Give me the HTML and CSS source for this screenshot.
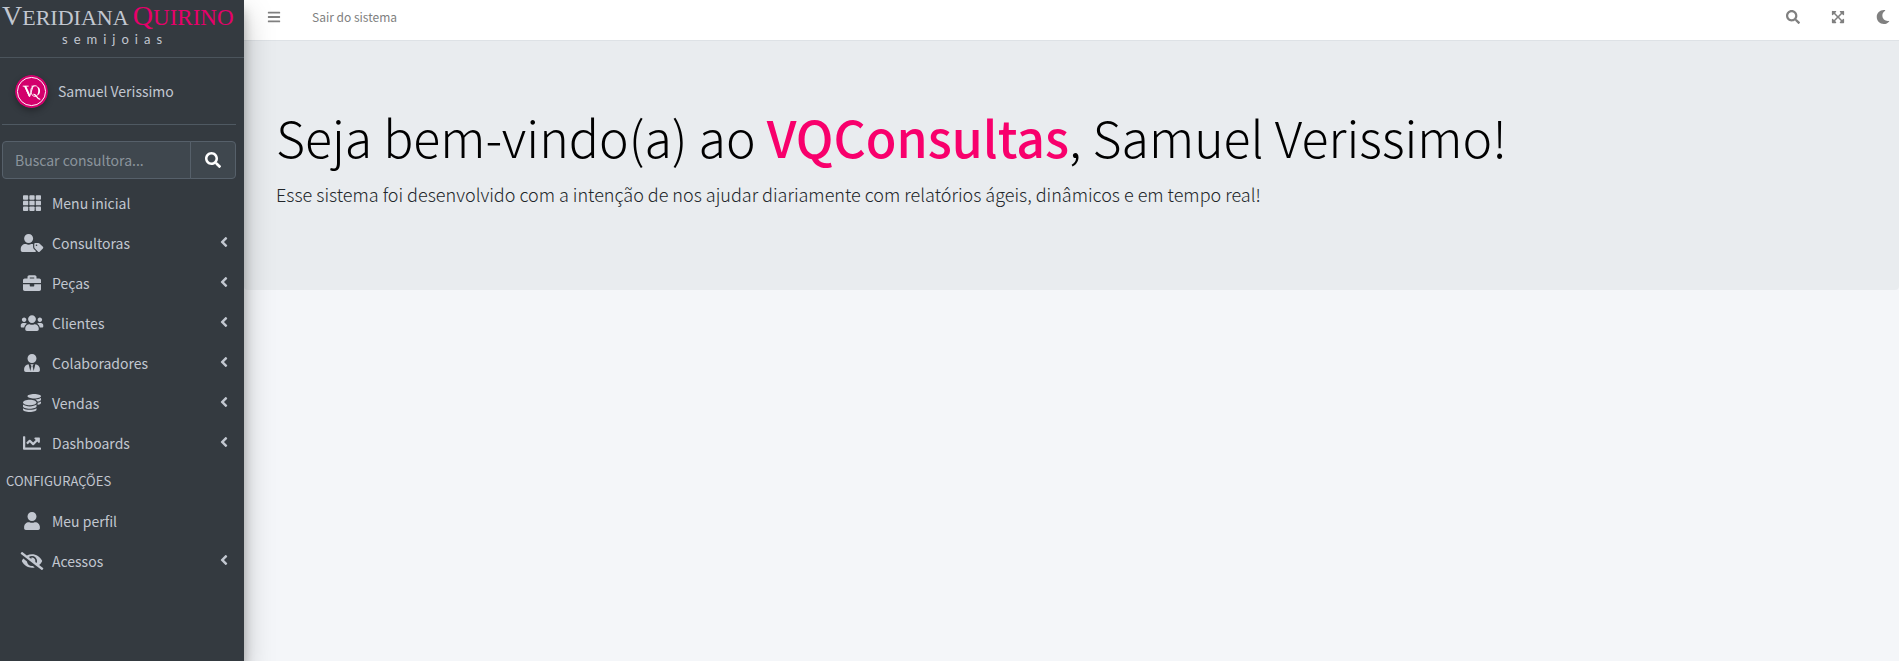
FILE: index.html
```html
<!DOCTYPE html>
<html lang="pt-BR">
<head>
<meta charset="utf-8">
<meta name="viewport" content="width=device-width, initial-scale=1">
<title>VQConsultas</title>
<link rel="stylesheet" href="styles.css">
</head>
<body>
<svg class="sprite" aria-hidden="true">
  <symbol id="bars" viewBox="0 0 448 512"><path d="M16 132h416c8.837 0 16-7.163 16-16V76c0-8.837-7.163-16-16-16H16C7.163 60 0 67.163 0 76v40c0 8.837 7.163 16 16 16zm0 160h416c8.837 0 16-7.163 16-16v-40c0-8.837-7.163-16-16-16H16c-8.837 0-16 7.163-16 16v40c0 8.837 7.163 16 16 16zm0 160h416c8.837 0 16-7.163 16-16v-40c0-8.837-7.163-16-16-16H16c-8.837 0-16 7.163-16 16v40c0 8.837 7.163 16 16 16z"/></symbol>
  <symbol id="search" viewBox="0 0 512 512"><path d="M505 442.700L405.300 343c-4.500-4.500-10.600-7-17-7H372c27.600-35.300 44-79.700 44-128C416 93.100 322.900 0 208 0S0 93.100 0 208s93.100 208 208 208c48.300 0 92.700-16.400 128-44v16.300c0 6.400 2.500 12.500 7 17l99.700 99.700c9.400 9.400 24.600 9.400 33.900 0l28.300-28.300c9.400-9.400 9.400-24.600.1-34zM208 336c-70.700 0-128-57.200-128-128 0-70.700 57.200-128 128-128 70.700 0 128 57.200 128 128 0 70.700-57.200 128-128 128z"/></symbol>
  <symbol id="expand" viewBox="0 0 448 512"><path d="M448 344v112a23.940 23.940 0 0 1-24 24H312c-21.390 0-32.090-25.900-17-41l36.200-36.200L224 295.600 116.770 402.900 153 439c15.090 15.100 4.390 41-17 41H24a23.940 23.940 0 0 1-24-24V344c0-21.400 25.890-32.100 41-17l36.190 36.200L184.460 256 77.180 148.700 41 185c-15.100 15.100-41 4.400-41-17V56a23.940 23.940 0 0 1 24-24h112c21.390 0 32.090 25.900 17 41l-36.200 36.200L224 216.400l107.230-107.300L295 73c-15.090-15.100-4.390-41 17-41h112a23.940 23.940 0 0 1 24 24v112c0 21.400-25.890 32.100-41 17l-36.190-36.200L263.540 256l107.280 107.300L407 327.100c15.100-15.200 41-4.500 41 16.900z"/></symbol>
  <symbol id="moon" viewBox="0 0 512 512"><path d="M283.211 512c78.962 0 151.079-35.925 198.857-94.792 7.068-8.708-.639-21.430-11.562-19.350-124.203 23.654-238.262-71.576-238.262-196.954 0-72.222 38.662-138.635 101.498-174.394 9.686-5.512 7.250-20.197-3.756-22.230A258.156 258.156 0 0 0 283.211 0c-141.309 0-256 114.511-256 256 0 141.309 114.511 256 256 256z"/></symbol>
  <symbol id="angle" viewBox="0 0 256 512"><path d="M31.700 239l136-136c9.400-9.400 24.600-9.400 33.900 0l22.600 22.600c9.400 9.400 9.400 24.600 0 33.900L127.900 256l96.400 96.400c9.400 9.400 9.400 24.600 0 33.900L201.700 409c-9.400 9.400-24.600 9.400-33.900 0l-136-136c-9.500-9.400-9.500-24.600-.1-34z"/></symbol>
  <symbol id="grid" viewBox="0 0 512 512"><rect y="32" width="149" height="128" rx="24"/><rect x="181" y="32" width="150" height="128" rx="24"/><rect x="363" y="32" width="149" height="128" rx="24"/><rect y="192" width="149" height="128" rx="24"/><rect x="181" y="192" width="150" height="128" rx="24"/><rect x="363" y="192" width="149" height="128" rx="24"/><rect y="352" width="149" height="128" rx="24"/><rect x="181" y="352" width="150" height="128" rx="24"/><rect x="363" y="352" width="149" height="128" rx="24"/></symbol>
  <symbol id="user-tag" viewBox="0 0 640 512"><path d="M630.600 364.900l-90.300-90.200c-12-12-28.300-18.700-45.300-18.700h-79.300c-17.700 0-32 14.300-32 32v79.200c0 17 6.700 33.200 18.700 45.200l90.300 90.200c12.500 12.500 32.800 12.500 45.300 0l92.500-92.500c12.600-12.500 12.600-32.700.1-45.200zm-182.800-21c-13.300 0-24-10.700-24-24s10.700-24 24-24 24 10.700 24 24c0 13.200-10.700 24-24 24zm-223.800-88c70.700 0 128-57.300 128-128C352 57.300 294.700 0 224 0S96 57.300 96 128c0 70.600 57.300 127.900 128 127.900zm127.800 111.200V294c-12.200-3.600-24.900-6.200-38.200-6.200h-16.700c-22.200 10.200-46.900 16-72.900 16s-50.600-5.800-72.900-16h-16.700C60.200 287.900 0 348.100 0 422.300V464c0 26.500 21.500 48 48 48h352c15.500 0 29.100-7.500 37.900-18.900l-58-58c-18.100-18.100-28.100-42.200-28.100-67.900z"/></symbol>
  <symbol id="briefcase" viewBox="0 0 512 512"><path d="M320 336c0 8.840-7.160 16-16 16h-96c-8.840 0-16-7.160-16-16v-48H0v144c0 25.600 22.400 48 48 48h416c25.600 0 48-22.400 48-48V288H320v48zm144-208h-80V80c0-25.600-22.400-48-48-48H176c-25.600 0-48 22.400-48 48v48H48c-25.600 0-48 22.400-48 48v80h512v-80c0-25.600-22.400-48-48-48zm-144 0H192V96h128v32z"/></symbol>
  <symbol id="users" viewBox="0 0 640 512"><path d="M96 224c35.300 0 64-28.700 64-64s-28.700-64-64-64-64 28.700-64 64 28.700 64 64 64zm448 0c35.300 0 64-28.700 64-64s-28.700-64-64-64-64 28.700-64 64 28.700 64 64 64zm32 32h-64c-17.600 0-33.500 7.100-45.100 18.600 40.300 22.100 68.900 62 75.100 109.400h66c17.700 0 32-14.300 32-32v-32c0-35.300-28.700-64-64-64zm-256 0c61.900 0 112-50.100 112-112S381.900 32 320 32 208 82.100 208 144s50.100 112 112 112zm76.800 32h-8.300c-20.800 10-43.900 16-68.500 16s-47.600-6-68.500-16h-8.300C179.600 288 128 339.600 128 403.200V432c0 26.500 21.500 48 48 48h288c26.500 0 48-21.500 48-48v-28.800c0-63.600-51.600-115.200-115.200-115.200zm-223.700-13.400C161.500 263.100 145.600 256 128 256H64c-35.300 0-64 28.700-64 64v32c0 17.700 14.300 32 32 32h65.900c6.300-47.400 34.900-87.300 75.200-109.400z"/></symbol>
  <symbol id="user-tie" viewBox="0 0 448 512"><path d="M224 256c70.700 0 128-57.300 128-128S294.700 0 224 0 96 57.300 96 128s57.300 128 128 128zm95.800 32.600L272 480l-32-136 32-56h-96l32 56-32 136-47.800-191.400C56.900 292 0 350.300 0 422.400V464c0 26.500 21.500 48 48 48h352c26.500 0 48-21.500 48-48v-41.600c0-72.100-56.900-130.400-128.200-133.800z"/></symbol>
  <symbol id="coins" viewBox="0 0 512 512"><path d="M0 405.300V448c0 35.300 86 64 192 64s192-28.700 192-64v-42.700C342.700 434.400 267.200 448 192 448S41.300 434.400 0 405.300zM320 128c106 0 192-28.700 192-64S426 0 320 0 128 28.700 128 64s86 64 192 64zM0 300.400V352c0 35.300 86 64 192 64s192-28.700 192-64v-51.600c-41.300 34-116.900 51.600-192 51.600S41.300 334.400 0 300.400zm416 11c57.300-11.100 96-31.700 96-55.400v-42.700c-23.200 16.400-57.300 27.600-96 34.500v63.600zM192 160C86 160 0 195.800 0 240s86 80 192 80 192-35.800 192-80-86-80-192-80zm219.300 56.300c60-10.800 100.700-32 100.700-56.300v-42.700c-35.500 25.100-96.500 38.600-160.700 41.800 29.500 14.300 51.200 33.500 60 57.200z"/></symbol>
  <symbol id="chart" viewBox="0 0 512 512"><path d="M496 384H64V80c0-8.840-7.160-16-16-16H16C7.160 64 0 71.160 0 80v336c0 17.670 14.330 32 32 32h464c8.840 0 16-7.160 16-16v-32c0-8.840-7.160-16-16-16zM464 96H345.940c-21.380 0-32.090 25.850-16.970 40.970l32.400 32.400L288 242.750l-73.370-73.370c-12.500-12.500-32.760-12.500-45.250 0l-68.690 68.690c-6.250 6.250-6.250 16.380 0 22.630l22.620 22.620c6.250 6.250 16.380 6.250 22.630 0L192 237.250l73.370 73.370c12.500 12.500 32.760 12.500 45.250 0l96-96 32.400 32.400c15.120 15.120 40.970 4.410 40.970-16.970V112c.01-8.840-7.150-16-15.990-16z"/></symbol>
  <symbol id="user" viewBox="0 0 448 512"><path d="M224 256c70.700 0 128-57.300 128-128S294.700 0 224 0 96 57.300 96 128s57.300 128 128 128zm89.600 32h-16.700c-22.200 10.200-46.900 16-72.900 16s-50.600-5.800-72.900-16h-16.700C60.200 288 0 348.200 0 422.400V464c0 26.500 21.500 48 48 48h352c26.500 0 48-21.500 48-48v-41.600c0-74.200-60.200-134.400-134.400-134.400z"/></symbol>
  <symbol id="eye-slash" viewBox="0 0 640 512"><path d="M320 400c-75.850 0-137.250-58.710-142.900-133.110L72.200 185.820c-13.790 17.300-26.480 35.590-36.720 55.590a32.350 32.350 0 0 0 0 29.190C89.710 376.410 197.070 448 320 448c26.910 0 52.870-4 77.890-10.460L346 397.390a144.130 144.130 0 0 1-26 2.610zm313.820 58.100l-110.550-85.440a331.250 331.250 0 0 0 81.250-102.070 32.350 32.350 0 0 0 0-29.190C550.290 135.590 442.930 64 320 64a308.150 308.150 0 0 0-147.320 37.700L45.460 3.370A16 16 0 0 0 23 6.180L3.370 31.450A16 16 0 0 0 6.180 53.900l588.360 454.730a16 16 0 0 0 22.460-2.810l19.640-25.270a16 16 0 0 0-2.820-22.450zm-183.720-142l-39.300-30.380A94.750 94.750 0 0 0 416 256a94.760 94.760 0 0 0-121.310-92.210A47.650 47.650 0 0 1 304 192a46.640 46.640 0 0 1-1.540 10l-73.610-56.890A142.310 142.310 0 0 1 320 112a143.920 143.920 0 0 1 144 144c0 21.630-5.290 41.790-13.900 60.110z"/></symbol>
</svg>
<div class="wrapper">
  <aside class="sidebar">
    <a class="brand" href="#">
      <span class="brand-name"><span class="brand-cap">V</span>ERIDIANA <span class="brand-accent"><span class="brand-cap">Q</span>UIRINO</span></span>
      <span class="brand-sub">semijoias</span>
    </a>
    <div class="sidebar-body">
      <a class="user-panel" href="#">
        <svg class="avatar" viewBox="0 0 34 34" aria-hidden="true"><circle cx="17" cy="17" r="17" fill="#d3006c"/><circle cx="17" cy="17" r="14.500" fill="none" stroke="#fff" stroke-width="1"/><path d="M8 11.500h6M10 11.500l5 11L18.500 12M17 11.500h3" fill="none" stroke="#fff" stroke-width="1"/><path d="M10.500 11.500l4.500 10" stroke="#fff" stroke-width="2"/><ellipse cx="20.500" cy="16.500" rx="4.200" ry="5.500" fill="none" stroke="#fff" stroke-width="1"/><path d="M24 13c1.500 2 1 5 0 7" fill="none" stroke="#fff" stroke-width="1.500"/><path d="M19 20c3-1 3 5 7 5" fill="none" stroke="#fff" stroke-width="1.300"/></svg>
        <span>Samuel Verissimo</span>
      </a>
      <form class="search">
        <input class="search-input" type="search" placeholder="Buscar consultora..." aria-label="Buscar consultora">
        <button class="search-button" type="button" aria-label="Buscar"><svg class="icon icon-search"><use href="#search"/></svg></button>
      </form>
      <nav class="menu" aria-label="Menu principal">
        <a class="menu-link" href="#"><svg class="icon menu-icon"><use href="#grid"/></svg><span class="menu-label">Menu inicial</span></a>
        <a class="menu-link" href="#"><svg class="icon menu-icon"><use href="#user-tag"/></svg><span class="menu-label">Consultoras</span><svg class="icon angle"><use href="#angle"/></svg></a>
        <a class="menu-link" href="#"><svg class="icon menu-icon"><use href="#briefcase"/></svg><span class="menu-label">Peças</span><svg class="icon angle"><use href="#angle"/></svg></a>
        <a class="menu-link" href="#"><svg class="icon menu-icon"><use href="#users"/></svg><span class="menu-label">Clientes</span><svg class="icon angle"><use href="#angle"/></svg></a>
        <a class="menu-link" href="#"><svg class="icon menu-icon"><use href="#user-tie"/></svg><span class="menu-label">Colaboradores</span><svg class="icon angle"><use href="#angle"/></svg></a>
        <a class="menu-link" href="#"><svg class="icon menu-icon"><use href="#coins"/></svg><span class="menu-label">Vendas</span><svg class="icon angle"><use href="#angle"/></svg></a>
        <a class="menu-link" href="#"><svg class="icon menu-icon"><use href="#chart"/></svg><span class="menu-label">Dashboards</span><svg class="icon angle"><use href="#angle"/></svg></a>
        <h2 class="menu-header">CONFIGURAÇÕES</h2>
        <a class="menu-link" href="#"><svg class="icon menu-icon"><use href="#user"/></svg><span class="menu-label">Meu perfil</span></a>
        <a class="menu-link" href="#"><svg class="icon menu-icon"><use href="#eye-slash"/></svg><span class="menu-label">Acessos</span><svg class="icon angle"><use href="#angle"/></svg></a>
      </nav>
    </div>
  </aside>
  <div class="page">
    <header class="navbar">
      <button class="nav-button" type="button" aria-label="Alternar menu"><svg class="icon nav-icon"><use href="#bars"/></svg></button>
      <a class="nav-link" href="#">Sair do sistema</a>
      <div class="nav-tools">
        <button class="nav-button" type="button" aria-label="Pesquisar"><svg class="icon nav-icon"><use href="#search"/></svg></button>
        <button class="nav-button" type="button" aria-label="Tela cheia"><svg class="icon nav-icon"><use href="#expand"/></svg></button>
        <button class="nav-button" type="button" aria-label="Modo escuro"><svg class="icon nav-icon"><use href="#moon"/></svg></button>
      </div>
    </header>
    <main>
      <section class="hero">
        <h1 class="hero-title">Seja bem-vindo(a) ao <span class="hero-accent">VQConsultas</span>, Samuel Verissimo!</h1>
        <p class="hero-lead">Esse sistema foi desenvolvido com a intenção de nos ajudar diariamente com relatórios ágeis, dinâmicos e em tempo real!</p>
      </section>
    </main>
  </div>
</div>
</body>
</html>
```
FILE: styles.css
```css
* { box-sizing: border-box; }
body {
  margin: 0;
  background: #f4f6f9;
  color: #212529;
  font: 14px/24px "Source Sans Pro", "Noto Sans CJK SC", "Open Sans", sans-serif;
}
a { color: inherit; text-decoration: none; }
button, input { font: inherit; }
.sprite { display: none; }
.icon { display: block; width: 16px; height: 16px; flex: none; fill: currentColor; }
.wrapper { display: flex; min-height: 100vh; }

/* Sidebar */
.sidebar {
  position: relative;
  z-index: 1;
  flex: 0 0 244px;
  background: #343a40;
  color: #c2c7d0;
  box-shadow: 0 14px 28px rgba(0, 0, 0, .25), 0 10px 10px rgba(0, 0, 0, .22);
}
.brand {
  display: flex;
  flex-direction: column;
  height: 58px;
  border-bottom: 1px solid #4b545c;
  white-space: nowrap;
}
.brand-name { padding: 2px 0 0 2px; font: 22px/28px "Liberation Serif", serif; }
.brand-cap { font-size: 28px; }
.brand-accent { color: #e6006b; font-size: 23px; }
.brand-sub { padding-left: 62px; font-family: Lato, sans-serif; font-size: 13px; line-height: 14px; letter-spacing: 6px; }
.sidebar-body { padding: 0 8px 0 2px; }
.user-panel {
  display: flex;
  align-items: center;
  gap: 10px;
  height: 67px;
  padding-left: 13px;
  border-bottom: 1px solid #4f5962;
}
.avatar { width: 33px; height: 33px; border-radius: 50%; box-shadow: 0 3px 6px rgba(0, 0, 0, .3); }
.search { display: flex; height: 38px; margin: 16px 0 4px; }
.search-input, .search-button { border: 1px solid #56606a; background: #3f474e; color: #fff; }
.search-input {
  flex: 1;
  min-width: 0;
  padding: 0 12px;
  border-radius: 4px 0 0 4px;
}
.search-input::placeholder { color: #8b949c; opacity: 1; }
.search-button {
  display: flex;
  align-items: center;
  justify-content: center;
  width: 46px;
  margin-left: -1px;
  padding: 0;
  border-radius: 0 4px 4px 0;
}
.menu-link { display: flex; align-items: center; height: 40px; padding: 0 4px 0 16px; }
.menu-icon { width: 28px; height: 18px; }
.menu-label { flex: 1; padding-left: 6px; }
.angle { margin-bottom: 2px; }
.menu-header { margin: 0; padding: 6px 4px 8px; font-size: 13px; font-weight: 400; line-height: 24px; }

/* Page */
.page { flex: 1; min-width: 0; }
.navbar {
  display: flex;
  align-items: center;
  height: 41px;
  padding: 0 0 7px 7px;
  border-bottom: 1px solid #dee2e6;
  background: #fff;
  color: #808080;
  font-size: 12px;
}
.nav-button { width: 45px; padding: 0; border: 0; background: none; color: inherit; }
.nav-icon { height: 14px; margin: 0 auto; }
.nav-link { padding: 0 16px; }
.nav-tools { display: flex; margin: 0 -6px 0 auto; }
.hero { padding: 64px 32px; background: #e9ecef; border-radius: 0 0 4px 4px; }
.hero-title { margin: 0 0 12px; color: #000; font-size: 50px; font-weight: 300; line-height: 62px; }
.hero-accent { color: #f8006c; font-weight: 500; }
.hero-lead { margin: 0 0 17px; font-size: 18px; font-weight: 300; line-height: 30px; }
```
